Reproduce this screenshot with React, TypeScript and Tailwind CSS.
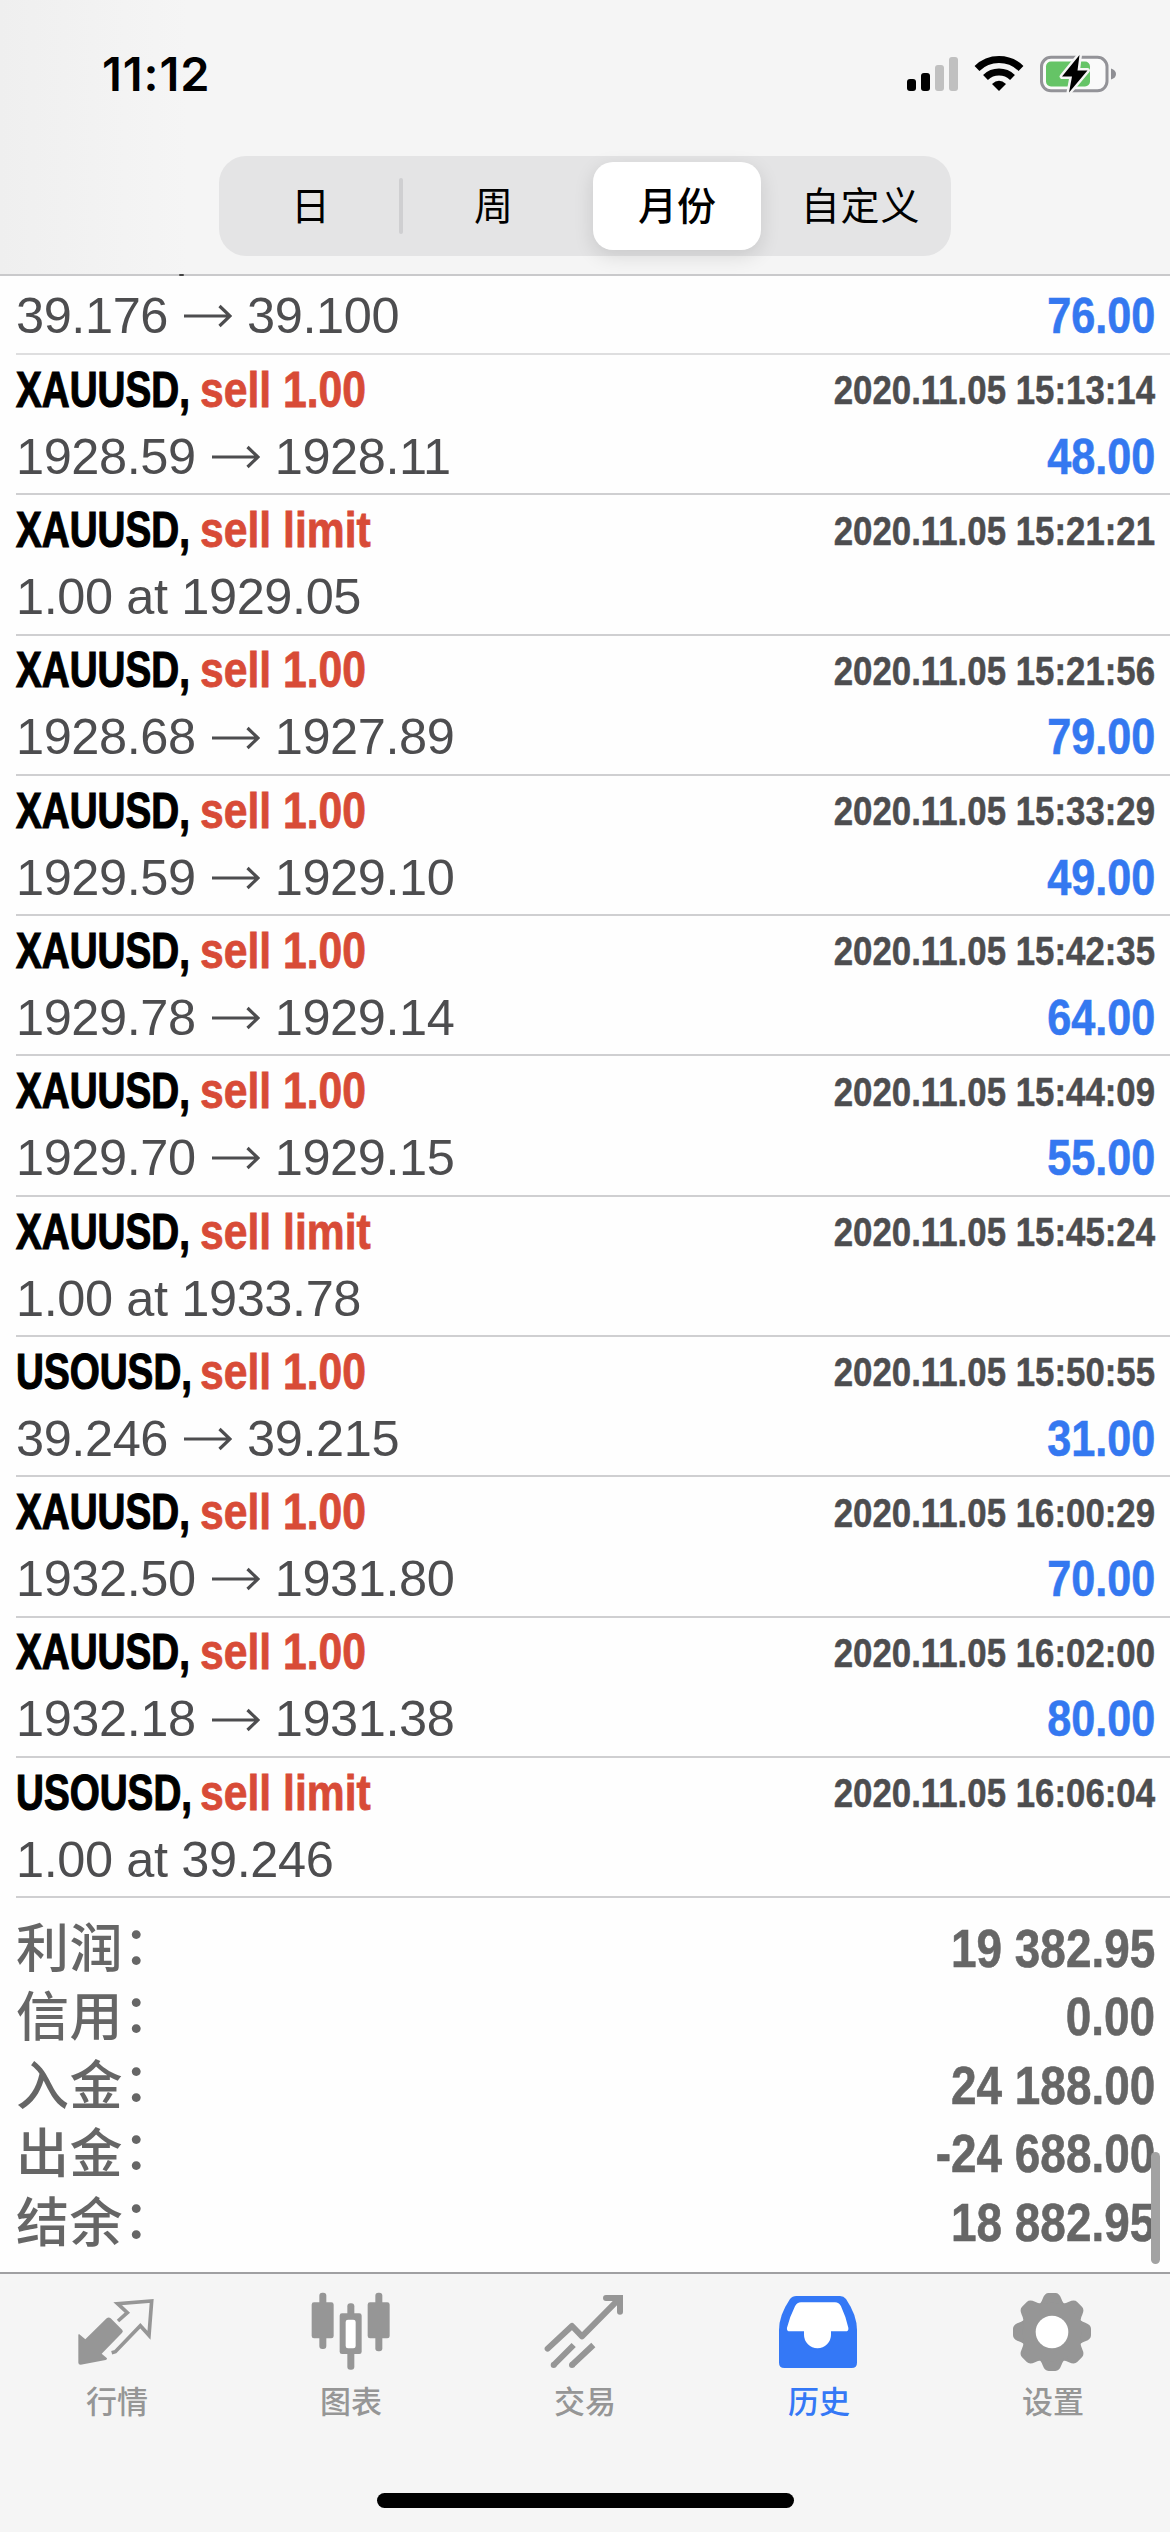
import React from "react";

type Deal = { symbol: string; side: string; time: string; from?: string; to?: string; order?: string; profit?: string };

const deals: Deal[] = [
  { symbol: "XAUUSD,", side: "sell 1.00", time: "2020.11.05 15:13:14", from: "1928.59", to: "1928.11", profit: "48.00" },
  { symbol: "XAUUSD,", side: "sell limit", time: "2020.11.05 15:21:21", order: "1.00 at 1929.05" },
  { symbol: "XAUUSD,", side: "sell 1.00", time: "2020.11.05 15:21:56", from: "1928.68", to: "1927.89", profit: "79.00" },
  { symbol: "XAUUSD,", side: "sell 1.00", time: "2020.11.05 15:33:29", from: "1929.59", to: "1929.10", profit: "49.00" },
  { symbol: "XAUUSD,", side: "sell 1.00", time: "2020.11.05 15:42:35", from: "1929.78", to: "1929.14", profit: "64.00" },
  { symbol: "XAUUSD,", side: "sell 1.00", time: "2020.11.05 15:44:09", from: "1929.70", to: "1929.15", profit: "55.00" },
  { symbol: "XAUUSD,", side: "sell limit", time: "2020.11.05 15:45:24", order: "1.00 at 1933.78" },
  { symbol: "USOUSD,", side: "sell 1.00", time: "2020.11.05 15:50:55", from: "39.246", to: "39.215", profit: "31.00" },
  { symbol: "XAUUSD,", side: "sell 1.00", time: "2020.11.05 16:00:29", from: "1932.50", to: "1931.80", profit: "70.00" },
  { symbol: "XAUUSD,", side: "sell 1.00", time: "2020.11.05 16:02:00", from: "1932.18", to: "1931.38", profit: "80.00" },
  { symbol: "USOUSD,", side: "sell limit", time: "2020.11.05 16:06:04", order: "1.00 at 39.246" },
];

const totals = [
  ["利润", "19 382.95"],
  ["信用", "0.00"],
  ["入金", "24 188.00"],
  ["出金", "-24 688.00"],
  ["结余", "18 882.95"],
];

function StatusIcons() {
  return (
    <svg className="h-[50px] w-[220px]" viewBox="900 48 220 50">
      <rect x="907" y="79" width="9" height="12" rx="3" />
      <rect x="921" y="73" width="9" height="18" rx="3" />
      <rect x="935" y="65" width="9" height="26" rx="3" fill="#c0c0c0" />
      <rect x="949" y="57" width="9" height="34" rx="3" fill="#c0c0c0" />
      <g fill="none" stroke="#000" strokeWidth="7">
        <path d="M977 68.500A31.500 31.500 0 0 1 1021 68.500" />
        <path d="M985.500 77.500A19.500 19.500 0 0 1 1012.500 77.500" />
      </g>
      <path d="M999 91L992 84Q999 77.500 1006 84Z" />
      <rect x="1041.500" y="57.300" width="65.500" height="33.500" rx="9.500" fill="#fafafa" stroke="#939398" strokeWidth="3" />
      <rect x="1046" y="61.500" width="44" height="25" rx="5" fill="#65c466" />
      <path d="M1111 68.500Q1116 70 1116 74T1111 79.500Z" fill="#8e8e93" />
      <path d="M1079.500 55L1062 76.500H1072L1069 92.500L1087.500 70.500H1077.500Z" fill="#000" stroke="#f5f5f5" strokeWidth="5" paintOrder="stroke" strokeLinejoin="round" />
    </svg>
  );
}

function Arrow() {
  return (
    <svg className="ml-[16px] mr-[15px] h-[24px] w-[48px]" viewBox="0 0 48 24" fill="none" stroke="#4d4d4f" strokeWidth="3.200">
      <path d="M0 12H46M35.500 2L46 12L35.500 22" />
    </svg>
  );
}

function PriceLine({ deal }: { deal: Deal }) {
  return (
    <div className="flex h-[66px] items-center justify-between">
      <div className="flex items-center text-[50.5px] leading-none tracking-[-0.4px] text-[#4d4d4f]">
        {deal.order ? (
          <span>{deal.order}</span>
        ) : (
          <>
            <span>{deal.from}</span>
            <Arrow />
            <span>{deal.to}</span>
          </>
        )}
      </div>
      {deal.profit && (
        <span className="origin-right scale-x-[0.855] text-[50.5px] font-bold leading-none text-[#3478f0] [-webkit-text-stroke:0.6px_#3478f0]">
          {deal.profit}
        </span>
      )}
    </div>
  );
}

function DealRow({ deal }: { deal: Deal }) {
  return (
    <div className="ml-4 box-border h-[140.300px] border-b-2 border-[#cfcfd1] pr-[15px]">
      <div className="flex h-[69px] items-center justify-between pt-[1px] font-bold">
        <div className="flex text-[50.5px] leading-none">
          <span className="w-[184px]">
            <span className="inline-block origin-left scale-x-[0.765] text-black [-webkit-text-stroke:1.2px_#000]">{deal.symbol}</span>
          </span>
          <span className="origin-left scale-x-[0.845] text-[#d84b37] [-webkit-text-stroke:0.8px_#d84b37]">{deal.side}</span>
        </div>
        <span className="origin-right scale-x-[0.839] text-[41.5px] leading-none text-[#4d4d4f] [-webkit-text-stroke:0.5px_#4d4d4f]">{deal.time}</span>
      </div>
      <PriceLine deal={deal} />
    </div>
  );
}

function QuotesIcon() {
  return (
    <svg className="size-[84px]" viewBox="225 90 252 252" fill="#969696">
      <path d="M237 222L256 238L320 175Q326 170 332 175L367 210Q371 215 365 220L305 281L321 295Q322 298 317 300L242 314Q235 314 235 308V224Z" />
      <path d="M354 183L382 158L353 131L455 123L447 226L421 197L346 275L335 278" fill="none" stroke="#969696" strokeWidth="11" />
    </svg>
  );
}

function ChartsIcon() {
  return (
    <svg className="size-[84px]" viewBox="925 90 252 252" fill="#969696">
      <rect x="956" y="98" width="21" height="169" rx="9" />
      <rect x="933" y="127" width="66" height="108" rx="7" />
      <rect x="1124" y="98" width="21" height="176" rx="9" />
      <rect x="1101" y="127" width="66" height="108" rx="7" />
      <rect x="1040" y="130" width="21" height="199" rx="9" />
      <rect x="1017" y="160" width="66" height="122" rx="7" />
      <rect x="1035" y="179" width="30" height="86" rx="7" fill="#fff" />
    </svg>
  );
}

function TradeIcon() {
  return (
    <svg className="size-[84px]" viewBox="279 90 252 252" fill="none" stroke="#969696" strokeWidth="18">
      <path d="M293 266L366 198L396 229L508 116" strokeLinejoin="round" strokeLinecap="round" />
      <path d="M468 114H510V155" strokeLinecap="round" />
      <path d="M371 255L311 315M430 255L366 315" />
      <circle cx="311" cy="315" r="9" fill="#969696" stroke="none" />
      <circle cx="366" cy="315" r="9" fill="#969696" stroke="none" />
    </svg>
  );
}

function HistoryIcon() {
  return (
    <svg className="size-[84px]" viewBox="171 90 252 252">
      <path d="M229 108H360Q371 108 378 117Q411 166 411 210V308Q411 324 395 324H193Q177 324 177 308V210Q177 166 210 117Q217 108 229 108Z" fill="#3478f6" />
      <path d="M243 127H345Q357 127 363 139Q378 171 385 203Q387 214 376 214H333V224A40 40 0 0 1 252 224V214H210Q199 214 201 203Q209 171 225 139Q231 127 243 127Z" fill="#fff" />
    </svg>
  );
}

function SettingsIcon() {
  return (
    <svg className="size-[84px]" viewBox="-123 -126 252 252" fill="#969696">
      <g>
        {[0, 45, 90, 135, 180, 225, 270, 315].map((angle) => (
          <path key={angle} transform={`rotate(${angle})`} d="M-46 -78Q-33 -84 -28 -100Q-22 -117 -10 -117H10Q22 -117 28 -100Q33 -84 46 -78L0 -20Z" />
        ))}
        <circle r="88" />
      </g>
      <circle r="49" fill="#fff" />
    </svg>
  );
}

const tabs = [
  { label: "行情", Icon: QuotesIcon },
  { label: "图表", Icon: ChartsIcon },
  { label: "交易", Icon: TradeIcon },
  { label: "历史", Icon: HistoryIcon, active: true },
  { label: "设置", Icon: SettingsIcon },
];

export default function App() {
  return (
    <div className="flex h-[2532px] w-[1170px] flex-col overflow-hidden bg-[#fefefe] font-['Liberation_Sans','Noto_Sans_CJK_SC',sans-serif]">
      <header className="relative flex h-[276px] shrink-0 flex-col items-center border-b-2 border-[#c9c9cb] bg-[linear-gradient(90deg,#efefef,#f5f5f5_16%)]">
        <div className="flex h-[156px] w-full justify-between pl-[102px] pr-[50px]">
          <span className="mt-[51px] font-['Inter',sans-serif] text-[47px] font-semibold leading-[46px] tracking-[0.9px]">11:12</span>
          <div className="mt-[48px]">
            <StatusIcons />
          </div>
        </div>
        <div className="relative grid h-[100px] w-[732px] grid-cols-4 items-center rounded-[27px] bg-[#e4e4e5] text-[39px] leading-none text-black">
          <span className="text-center">日</span>
          <span className="text-center">周</span>
          <span className="ml-[8px] flex h-[88px] w-[168px] items-center justify-center rounded-[20px] bg-white font-medium shadow-[0_6px_20px_rgba(0,0,0,0.12)]">月份</span>
          <span className="pl-[2px] text-center tracking-[0.8px]">自定义</span>
          <i className="absolute left-[180px] top-[22px] h-[56px] w-[4px] rounded bg-[#cfcfd1]" />
        </div>
        <i className="absolute bottom-[-2px] left-[179px] h-[2px] w-[5px] rounded-full bg-[#444]" />
      </header>

      <main className="relative h-[1996px] shrink-0">
        <div className="ml-4 flex h-[79px] flex-col justify-end border-b-2 border-[#dededf] pb-[4px] pr-[15px]">
          <PriceLine deal={{ symbol: "", side: "", time: "", from: "39.176", to: "39.100", profit: "76.00" }} />
        </div>
        {deals.map((deal) => (
          <DealRow key={deal.time} deal={deal} />
        ))}
        <div className="pl-4 pr-[15px] pt-[15px] text-[#666]">
          {totals.map(([label, value]) => (
            <div key={label} className="flex h-[68.600px] items-center justify-between leading-none">
              <span className="-mt-[5px] font-['Noto_Sans_CJK_SC',sans-serif] text-[53px] font-medium tracking-[0.5px]">
                {label}
                <span className="inline-block -translate-y-[3px]">：</span>
              </span>
              <span className="origin-right scale-x-[0.85] text-[54px] font-bold [-webkit-text-stroke:0.6px_#666]">{value}</span>
            </div>
          ))}
        </div>
        <div className="absolute right-[10px] top-[1876px] h-[112px] w-[9px] rounded-full bg-[#a2a2a2]" />
      </main>

      <footer className="flex h-[260px] shrink-0 flex-col items-center border-t-2 border-[#a0a0a2] bg-[#f5f5f5]">
        <nav className="grid w-full grid-cols-5 pt-[16px]">
          {tabs.map(({ label, Icon, active }) => (
            <div key={label} className={active ? "flex flex-col items-center text-[#3478f6]" : "flex flex-col items-center text-[#969696]"}>
              <Icon />
              <span className="mt-[13px] text-[31px] font-medium leading-[32px]">{label}</span>
            </div>
          ))}
        </nav>
        <div className="mt-auto mb-[24px] h-[15px] w-[417px] rounded-full bg-black" />
      </footer>
    </div>
  );
}
